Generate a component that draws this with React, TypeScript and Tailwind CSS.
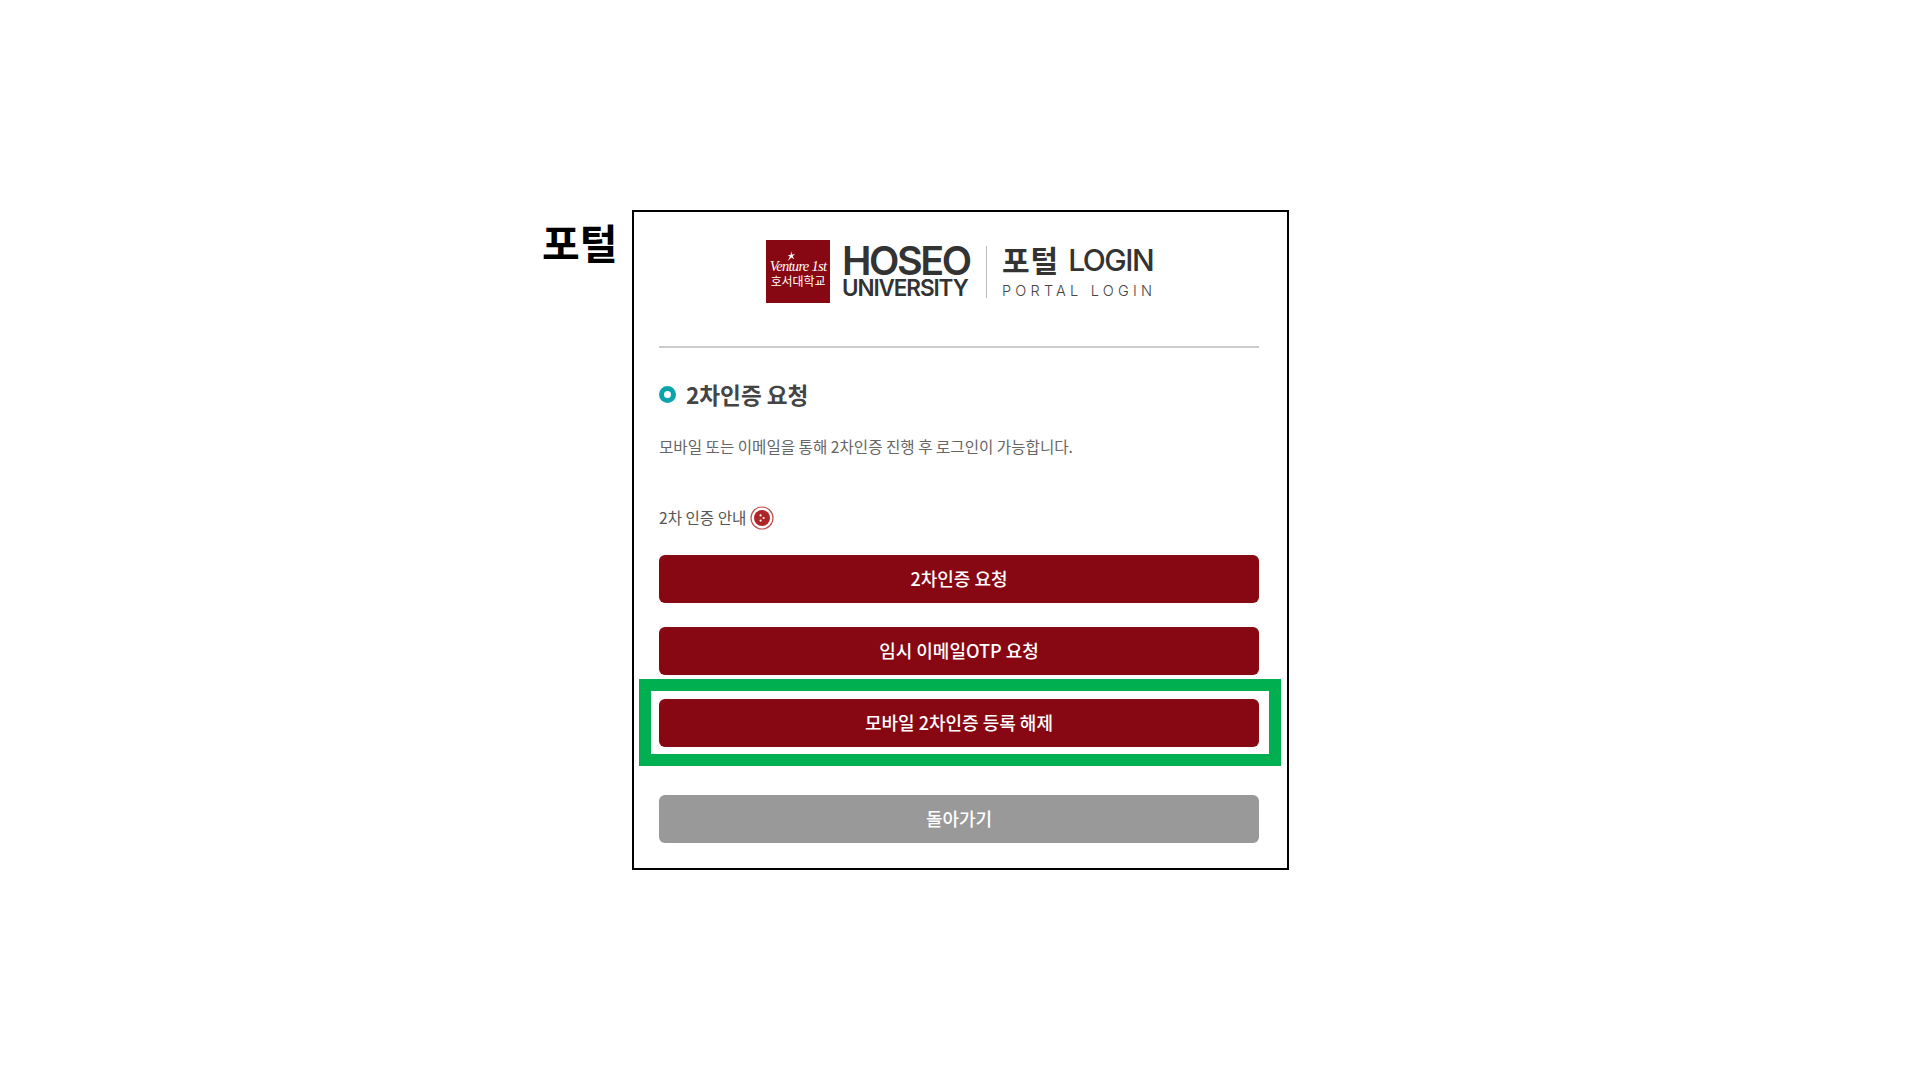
const krFont = "font-['Noto_Sans_CJK_KR','Noto_Sans',sans-serif]";

function HoseoMark() {
  return (
    <div className="relative flex h-[63px] w-[64px] shrink-0 flex-col items-center bg-[#870713] pt-[19px] text-white">
      <svg viewBox="0 0 12 12" className="absolute left-[19px] top-[11px] h-[11px] w-[11px]" fill="white">
        <path d="M7 0 7.6 4 11 3 8.4 5.6 10 9 7 7 3 11 5.4 6 3 4.6 6.2 4.2Z" />
      </svg>
      <span className="whitespace-nowrap font-['Liberation_Serif',serif] text-[14.5px] italic leading-[15px] tracking-[-0.7px]">
        Venture 1st
      </span>
      <span className={`${krFont} whitespace-nowrap text-[12px] leading-[14px] tracking-[-0.1px]`}>호서대학교</span>
    </div>
  );
}

function Logo() {
  return (
    <div className="flex h-[63px] items-center pl-[107px]">
      <HoseoMark />
      <div className="ml-[12px] flex w-[130px] flex-col pb-[2px] font-['Inter',sans-serif] text-[#333]">
        <span className="whitespace-nowrap text-[39.5px] font-semibold leading-[33px] tracking-[-2.4px]">HOSEO</span>
        <span className="whitespace-nowrap text-[22.5px] font-semibold leading-[19px] tracking-[-1.1px]">UNIVERSITY</span>
      </div>
      <div className="ml-[14px] h-[52px] w-px bg-[#bbb]" />
      <div className="ml-[15px] flex flex-col text-[#333]">
        <span className="mb-[8px] flex h-[30px] items-center gap-[9px]">
          <span className={`${krFont} text-[30px] font-bold leading-[30px] tracking-[1px]`}>포털</span>
          <span className="pt-[3px] font-['Inter',sans-serif] text-[30px] font-medium leading-[30px] tracking-[-1.5px]">
            LOGIN
          </span>
        </span>
        <span className="font-['Inter',sans-serif] text-[14.5px] font-light leading-[18px] tracking-[4.2px] text-[#444]">
          PORTAL LOGIN
        </span>
      </div>
    </div>
  );
}

function GuideIcon() {
  return (
    <svg viewBox="0 0 24 24" className="h-[24px] w-[24px]">
      <circle cx="12" cy="12" r="11" fill="none" stroke="#c0504d" strokeWidth="1.2" />
      <circle cx="12" cy="12" r="8" fill="#ae2527" />
      <circle cx="10.6" cy="9.4" r="1.1" fill="white" />
      <circle cx="13.6" cy="12" r="1.1" fill="white" />
      <circle cx="10.6" cy="14.6" r="1.1" fill="white" />
    </svg>
  );
}

function ActionButton({ label, gray }: { label: string; gray?: boolean }) {
  return (
    <button
      className={`flex h-[48px] w-full items-center justify-center rounded-[6px] pb-[2px] text-[18px] font-medium text-white ${
        gray ? "bg-[#999999]" : "bg-[#870713]"
      }`}
    >
      {label}
    </button>
  );
}

export default function App() {
  return (
    <div className={`${krFont} flex h-screen w-full items-start bg-white pl-[542px] pt-[210px]`}>
      <h1 className="w-[90px] pt-[5px] text-[41px] font-bold leading-[52px] text-black">포털</h1>
      <div className="relative flex h-[660px] w-[657px] flex-col border-2 border-black pl-[25px] pr-[28px] pt-[28px]">
        <Logo />
        <div className="mt-[43px] h-[2px] bg-[#cccccc]" />

        <div className="mt-[28px] flex h-[36px] items-center pt-[1px]">
          <span className="h-[17px] w-[17px] rounded-full border-[5px] border-[#0aa5ab]" />
          <h2 className="ml-[10px] text-[22.6px] font-bold text-[#444444]">2차인증 요청</h2>
        </div>
        <p className="mt-[23px] text-[15.6px] leading-[22px] text-[#666666]">
          모바일 또는 이메일을 통해 2차인증 진행 후 로그인이 가능합니다.
        </p>
        <div className="mt-[49px] flex h-[24px] items-center gap-[4px] text-[15.6px] text-[#555555]">
          2차 인증 안내
          <GuideIcon />
        </div>

        <div className="mt-[25px] flex flex-col gap-[24px]">
          <ActionButton label="2차인증 요청" />
          <ActionButton label="임시 이메일OTP 요청" />
          <ActionButton label="모바일 2차인증 등록 해제" />
        </div>
        <div className="mt-[48px]">
          <ActionButton label="돌아가기" gray />
        </div>

        {/* annotation drawn over the third button */}
        <div className="pointer-events-none absolute left-[5px] top-[467px] h-[87px] w-[642px] border-[12px] border-[#00b050]" />
      </div>
    </div>
  );
}
